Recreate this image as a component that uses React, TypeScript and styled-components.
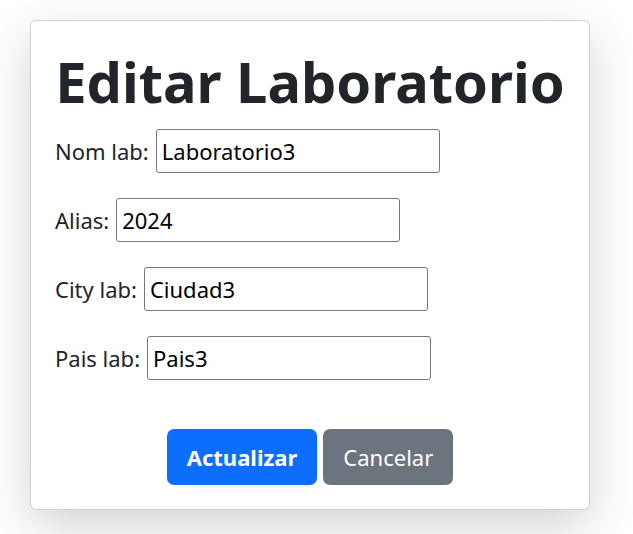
import { FC } from 'react'
import styled, { createGlobalStyle } from 'styled-components'

const GlobalStyle = createGlobalStyle`
  body {
    margin: 0;
    background: #fff;
    font-family: "Noto Sans", "Open Sans", sans-serif;
    color: #212529;
  }
`

const Page = styled.main`
  box-sizing: border-box;
  min-height: 100vh;
  padding: 20px 0 40px 30px;
`

const Card = styled.section`
  box-sizing: border-box;
  width: 560px;
  padding: 24px;
  background: #fff;
  border: 1px solid rgba(0, 0, 0, 0.175);
  border-radius: 6px;
  box-shadow: 0 1rem 3rem rgba(0, 0, 0, 0.175);
`

const Title = styled.h1`
  margin: 0 0 12px;
  text-align: center;
  white-space: nowrap;
  font-size: 56px;
  line-height: 72px;
  font-weight: 700;
  color: #212529;
`

const Form = styled.form`
  display: flex;
  flex-direction: column;
  gap: 25px;
`

const Field = styled.div`
  display: flex;
  align-items: center;
  gap: 7px;
  height: 44px;
`

const Label = styled.label`
  font-size: 22px;
  color: #212529;
`

const Input = styled.input`
  box-sizing: border-box;
  width: 284px;
  height: 44px;
  padding: 0 5px;
  font-family: inherit;
  font-size: 22px;
  color: #000;
  border: 1px solid #767676;
  border-radius: 3px;
`

const Actions = styled.div`
  display: flex;
  justify-content: center;
  gap: 6px;
  margin-top: 24px;
`

const Button = styled.button<{ $variant: 'primary' | 'secondary' }>`
  height: 56px;
  padding: 0 20px;
  font-family: inherit;
  font-size: 22px;
  font-weight: ${p => (p.$variant === 'primary' ? 700 : 400)};
  color: #fff;
  background: ${p => (p.$variant === 'primary' ? '#0d6efd' : '#6c757d')};
  border: none;
  border-radius: 7px;
`

const fields = [
  { id: 'nom', label: 'Nom lab:', value: 'Laboratorio3' },
  { id: 'alias', label: 'Alias:', value: '2024' },
  { id: 'city', label: 'City lab:', value: 'Ciudad3' },
  { id: 'pais', label: 'Pais lab:', value: 'Pais3' },
]

const App: FC = () => {
  return (
    <Page>
      <GlobalStyle />
      <Card>
        <Title>Editar Laboratorio</Title>
        <Form onSubmit={e => e.preventDefault()}>
          {fields.map(f => (
            <Field key={f.id}>
              <Label htmlFor={f.id}>{f.label}</Label>
              <Input id={f.id} defaultValue={f.value} />
            </Field>
          ))}
          <Actions>
            <Button type="submit" $variant="primary">
              Actualizar
            </Button>
            <Button type="button" $variant="secondary">
              Cancelar
            </Button>
          </Actions>
        </Form>
      </Card>
    </Page>
  )
}

export default App
